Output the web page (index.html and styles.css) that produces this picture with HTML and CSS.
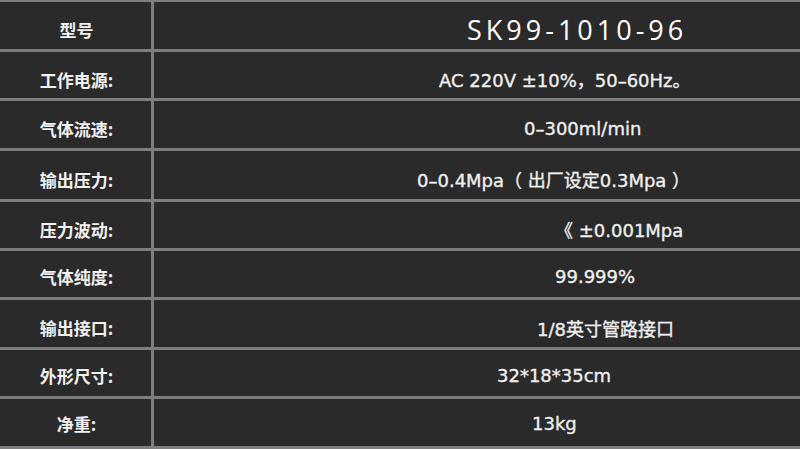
FILE: index.html
```html
<!DOCTYPE html>
<html lang="zh-CN">
<head>
<meta charset="utf-8">
<link rel="stylesheet" href="styles.css">
</head>
<body>
<div class="spec">
  <div class="row r1"><div class="label">型号</div><div class="value model v1">SK99-1010-96</div></div>
  <div class="row r2"><div class="label">工作电源:</div><div class="value v2">AC 220V ±10%，50–60Hz。</div></div>
  <div class="row r3"><div class="label">气体流速:</div><div class="value v3">0–300ml/min</div></div>
  <div class="row r4"><div class="label">输出压力:</div><div class="value v4">0–0.4Mpa（ 出厂设定0.3Mpa ）</div></div>
  <div class="row r5"><div class="label">压力波动:</div><div class="value v5">《 ±0.001Mpa</div></div>
  <div class="row r6"><div class="label">气体纯度:</div><div class="value v6">99.999%</div></div>
  <div class="row r7"><div class="label">输出接口:</div><div class="value v7">1/8英寸管路接口</div></div>
  <div class="row r8"><div class="label">外形尺寸:</div><div class="value v8">32*18*35cm</div></div>
  <div class="row r9"><div class="label">净重:</div><div class="value v9">13kg</div></div>
</div>
</body>
</html>
```

FILE: styles.css
```css
html, body {
  margin: 0;
  padding: 0;
  background: #2a2a2a;
}
body {
  width: 800px;
  height: 449px;
  overflow: hidden;
}
.spec {
  display: grid;
  grid-template-columns: 1fr;
  grid-template-rows: 47px 46px 47px 48px 46px 46px 47px 46px 47px;
  row-gap: 3px;
  background: #7e7e7e;
  border-top: 2px solid #7e7e7e;
  border-bottom: 3px solid #7e7e7e;
}
.row {
  display: grid;
  grid-template-columns: 151px 1fr;
  column-gap: 3px;
  background: #7e7e7e;
}
.label, .value {
  background: #2a2a2a;
  display: flex;
  align-items: center;
  padding-top: 8px;
  box-sizing: border-box;
  color: #f0f0f0;
}
.label {
  justify-content: center;
  font-family: "Noto Sans CJK SC", sans-serif;
  font-weight: 700;
  font-size: 17px;
  padding-left: 2px;
}
.value {
  font-family: "DejaVu Sans", "Noto Sans CJK SC", sans-serif;
  font-size: 18px;
  white-space: nowrap;
  -webkit-text-stroke: 0.35px #f0f0f0;
}
.model {
  font-family: "Open Sans", sans-serif;
  font-size: 27px;
  letter-spacing: 4px;
  color: #ffffff;
  -webkit-text-stroke: 0;
}
.v1 { padding-left: 313px; }
.v2 { padding-left: 285px; }
.v3 { padding-left: 370px; }
.v4 { padding-left: 263px; }
.v5 { padding-left: 401px; }
.v6 { padding-left: 401px; }
.v7 { padding-left: 383px; }
.v8 { padding-left: 343px; }
.v9 { padding-left: 378px; padding-top: 2px; }
.r9 .label { padding-top: 2px; }
.r6 .label, .r6 .value, .r8 .label, .r8 .value { padding-top: 4px; }
```
